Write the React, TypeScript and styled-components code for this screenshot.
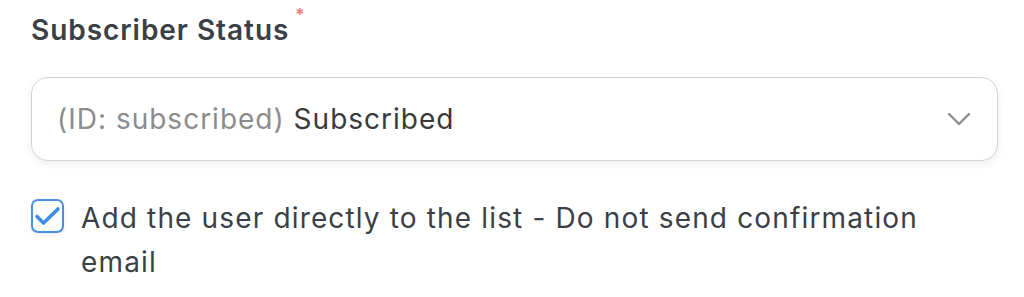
import styled, { createGlobalStyle } from "styled-components";

const GlobalStyle = createGlobalStyle`
  html, body {
    margin: 0;
    padding: 0;
    background: #ffffff;
  }
  body {
    font-family: Inter, "Noto Sans", sans-serif;
    -webkit-font-smoothing: antialiased;
  }
`;

const Field = styled.div`
  padding: 13px 26px 0 31px;
  display: flex;
  flex-direction: column;
`;

const Label = styled.label`
  font-size: 28px;
  font-weight: 600;
  letter-spacing: 0.95px;
  line-height: 34px;
  color: #3b3f46;
  display: flex;
  align-items: flex-start;
`;

const Required = styled.span`
  color: #f07a7a;
  font-size: 17px;
  line-height: 16px;
  margin-left: 6px;
  margin-top: -6px;
`;

const SelectBox = styled.div`
  margin-top: 30px;
  height: 84px;
  box-sizing: border-box;
  border: 1.5px solid #d2d2d2;
  border-radius: 17px;
  box-shadow: 0 3px 8px rgba(0, 0, 0, 0.07);
  display: flex;
  align-items: center;
  justify-content: space-between;
  padding: 0 26px 0 25px;
`;

const SelectText = styled.div`
  font-size: 28px;
  letter-spacing: 1px;
  color: #3a3a3a;
`;

const Hint = styled.span`
  color: #8c8c8c;
`;

const CheckRow = styled.div`
  margin-top: 37px;
  display: flex;
  align-items: flex-start;
  gap: 17px;
`;

const Box = styled.span<{ $checked?: boolean }>`
  flex: none;
  width: 33px;
  height: 34px;
  box-sizing: border-box;
  border: 2px solid ${({ $checked }) => ($checked ? "#4a90e2" : "#c8c8c8")};
  border-radius: 7px;
  box-shadow: 0 2px 5px rgba(0, 0, 0, 0.08);
  display: flex;
  align-items: center;
  justify-content: center;
  margin-top: 1px;
`;

const CheckText = styled.div`
  font-size: 28px;
  letter-spacing: 1.15px;
  line-height: 44px;
  color: #3b3f46;
  margin-top: -2px;
  max-width: 880px;
`;

const Chevron = () => (
  <svg width="24" height="14" viewBox="0 0 24 14" fill="none">
    <path d="M2 2l10 10L22 2" stroke="#8e8e8e" strokeWidth="2.4" strokeLinecap="round" strokeLinejoin="round" />
  </svg>
);

const Tick = () => (
  <svg width="29" height="30" viewBox="0 0 29 30" fill="none">
    <path d="M4 15.5l6.5 6.5L25 8" stroke="#3d8fe6" strokeWidth="3.6" strokeLinecap="round" strokeLinejoin="round" />
  </svg>
);

export default function App() {
  return (
    <>
      <GlobalStyle />
      <Field>
        <Label>
          Subscriber Status<Required>*</Required>
        </Label>
        <SelectBox>
          <SelectText>
            <Hint>(ID: subscribed)</Hint> Subscribed
          </SelectText>
          <Chevron />
        </SelectBox>
        <CheckRow>
          <Box $checked>
            <Tick />
          </Box>
          <CheckText>Add the user directly to the list - Do not send confirmation email</CheckText>
        </CheckRow>
      </Field>
    </>
  );
}
